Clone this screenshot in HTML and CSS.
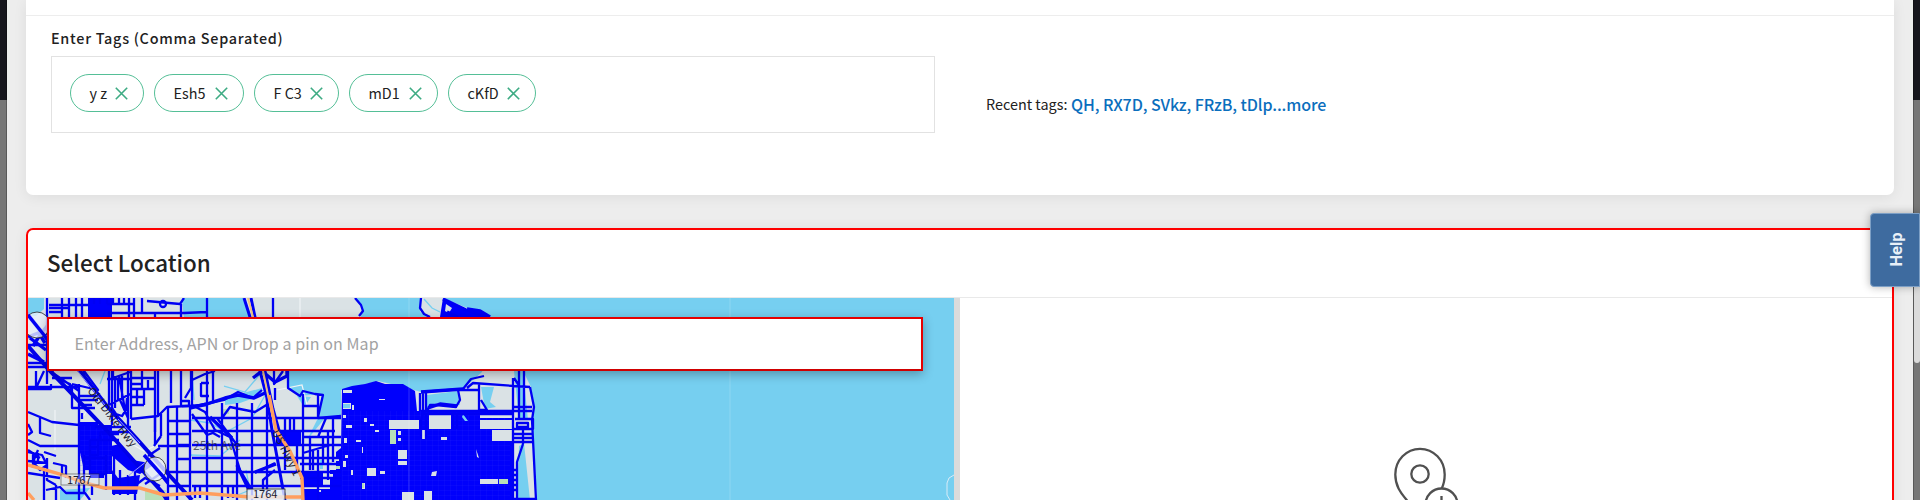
FILE: index.html
```html
<!DOCTYPE html>
<html lang="en">
<head>
<meta charset="utf-8">
<title>Select Location</title>
<link rel="stylesheet" href="styles.css">
</head>
<body>
<div class="page">
  <main class="modal">
    <section class="card tags-card">
      <div class="tags-row">
        <div class="tags-field">
          <div class="label">Enter Tags (Comma Separated)</div>
          <div class="tag-box">
            <span class="tag w1"><span>y z</span><svg class="x" viewBox="0 0 13 13"><path d="M.8.8l11.4 11.4M12.2.8L.8 12.2"/></svg></span>
            <span class="tag w2"><span>Esh5</span><svg class="x" viewBox="0 0 13 13"><path d="M.8.8l11.4 11.4M12.2.8L.8 12.2"/></svg></span>
            <span class="tag w3"><span>F C3</span><svg class="x" viewBox="0 0 13 13"><path d="M.8.8l11.4 11.4M12.2.8L.8 12.2"/></svg></span>
            <span class="tag w4"><span>mD1</span><svg class="x" viewBox="0 0 13 13"><path d="M.8.8l11.4 11.4M12.2.8L.8 12.2"/></svg></span>
            <span class="tag w5"><span>cKfD</span><svg class="x" viewBox="0 0 13 13"><path d="M.8.8l11.4 11.4M12.2.8L.8 12.2"/></svg></span>
          </div>
        </div>
        <div class="recent"><span class="recent-label">Recent tags:</span><span class="recent-links">QH, RX7D, SVkz, FRzB, tDlp...more</span></div>
      </div>
    </section>
    <section class="card location-card">
      <h2 class="title">Select Location</h2>
      <div class="location-body">
        <div class="map">
          <svg class="map-art" viewBox="28 298 926 202">
            <defs>
              <pattern id="lots" width="15" height="13.5" patternUnits="userSpaceOnUse" x="192" y="418"><path d="M0 1H15M1 0V13.5" stroke="#0000f0" stroke-width="2.4" fill="none"/></pattern>
              <pattern id="fine" width="6" height="5" patternUnits="userSpaceOnUse"><path d="M0 0H6M0 0V5" stroke="#3030f8" stroke-width=".3" fill="none"/></pattern>
            </defs>
            <rect x="28" y="298" width="926" height="202" fill="#76cff0"/>
            <path class="land" d="M28 298H182L184 317H207V298H355L362 306 361 317 350 330H287V371L288 388 300 396 322 394 318 417 341 416V390L378 381 400 386 421 392 463 389 482 372 488 345 420 312 421 298H443L520 330 523 371 531 387 534 407 532 420 537 500H28Z"/>
            <path class="water" d="M28 298H44V309L36 316H28ZM182 298H207V317H184ZM207 298H245L250 317H207ZM427 395L457 391 460 405 438 403 427 408ZM481 387H494L490 402 496 407 485 409ZM297 396L311 397 304 407ZM318 418H325L307 440ZM519 446L524 443 530 500H517ZM60 490L90 488 80 500H60ZM514 371H523L528 420H519ZM225 398L262 388 262 395 240 403 225 405Z"/>
            <path class="stream" d="M200 317V345L192 372 194 400M190 420L210 423 226 432 252 418 267 392M92 317L105 371 100 384M190 455L220 456 240 440M224 386L245 392 262 372M246 470L250 490 235 496M424 299L432 308 440 312"/>
            <path class="minor" d="M300 298V317M82 418l8-12M130 443l14 8 13-6M277 390l25-5 5 20M55 410v40"/>
            <path class="green" d="M145 490H166V500H145ZM223 409h6v5h-6Z"/>
            <path class="lots" d="M192 418H300V500H192Z"/>

            <path class="fill" d="M79 422H98L98 425H112V470L118 478 140 475 137 494H112V474H104V478H90V470H84L79 448ZM88 298H112V317H88ZM111 446L120 444 126 452 132 460 150 463 152 466 140 474 128 470 112 456ZM276 431H301V445H276ZM302 471H323V485H302ZM342 389L352 386 365 384 376 381 385 384 403 384 415 391 417 411H513V500H304V489H330V470H336V452L341 448ZM443 298L466 310 490 317H440Z"/>
            <path class="fine" d="M342 411H510V500H342ZM80 426H112V474H80Z"/>
            <path class="hole" d="M389 420h30v9h-30ZM429 415h22v14h-22ZM480 415h32v3h-32ZM480 420h32v9h-32ZM492 430h20v11h-20ZM421 430h6v9h-6ZM398 450h9v9h-9ZM398 461h9v4h-9ZM480 479h18v5h-18ZM367 468h9v8h-9ZM343 390h9v3h-9ZM343 403h8v6h-8ZM364 418h3v4h-3ZM343 415h3v3h-3ZM441 437h6v3h-6ZM432 472l5-1-1 5h-5ZM370 424h4v2h-4ZM346 425h6v3h-6ZM344 438h3v5h-3ZM356 440h5v2h-5ZM345 455h3v3h-3ZM362 447h1v6h-1ZM375 430h4v2h-4ZM402 492h12v8h-12ZM424 491h8v9h-8ZM362 483h3v6h-3ZM380 471h5v3h-5ZM398 431h3v4h-3ZM398 438h3v3h-3ZM476 449l3 9-2-1ZM446 304l6 4-3 5-4-2ZM335 457h4v4h-4ZM330 474h3v5h-3ZM343 461h3v6h-3ZM351 470h2v5h-2ZM317 490h4v2h-4ZM352 405h2v5h-2ZM379 399h6v1h-6Z"/>
            <path class="water" d="M343 404h7v4h-7ZM320 460h3v9h-3ZM463 414l5 7h-3l-3-4Z"/>
            <path class="green" d="M390 430h6v14h-6ZM499 479h9v5h-9ZM336 466h4v3h-4ZM362 483h2v5h-2Z"/>

            <path class="b2" d="M47 298V384M49 305H88M49 312H62M62 298V317M69 298V317M82 298V317M76 298V317M49 308H69M107 304H129M129 298V317M134 298V317M107 313H184L207 312M207 298V317M181 304V317M273 298V317M94 298V304M100 298V304M107 298V304M113 298V304M119 298V304M124 298V304M134 304H108M142 298V313M147 301L180 304 184 298M155 313V317M355 298L361 305 363 311 359 316M421 298L420 308 424 314 430 317"/>
            <path class="b2" d="M28 387H79M79 384V500M28 389H51V384M28 412L52 422 79 425M28 363H48L56 378 70 384 71 390M28 367H56M28 345L52 345M36 371V386M44 371L37 386M84 371L98 390 72 384M50 371L79 391M79 396H98M79 400H98M79 405H92M52 378H72M82 413V419M72 387V408L95 408M112 371V425M84 371V378"/>
            <path class="b2" d="M107 379H130M109 371V405M115 376V408M118 378V400M122 376V400M128 371V432M131 371V419M142 371V389M155 371V432M131 378H155M131 384H142M131 389H155M148 380V389M158 371V417M171 371V403M181 371V407M191 371V388L185 398M131 397H144M131 405H144M137 390V405M144 389V405M131 419L158 416 167 407 207 405M109 405L130 394M95 427H131M112 408L116 414 122 416 126 410 127 398M120 400L128 418M119 376L125 410"/>
            <path class="b2" d="M155 416V445M161 414V436M168 407V500M177 407V500M190 407V500M182 401h7v5h-7M190 418V500M168 421H190M168 434H190M177 445H190M158 446H190M177 459H190M148 456L160 448M168 472H192M168 486H190M161 436L154 446M113 371V378L130 372M145 484l15-10 8 10M137 484l8-6 15 8"/>
            <path class="b2" d="M100 432H130M90 440V475M100 432V440H90M98 440V455H90M90 447H98M98 440H119M119 434H102M84 458H106V474H90M84 455V478M106 455V490M114 455V495M120 470V495M128 475V495M135 470V500M28 440L40 446H79M40 418V433L51 436M28 424L32 432 28 435M28 452L42 455 47 465 40 470 33 462 38 450M47 458V480L56 485M28 473L60 478M53 463L66 466V478M44 452L56 456M33 452V468M38 453V463M28 461L47 463M44 470V500M56 485V500M46 490L60 487 66 493H85L90 500M84 478V494M92 485V495M62 466V475M28 450L40 458"/>
            <path class="b2" d="M192 371V405L205 412 215 430 230 437 240 470 252 490M192 380L205 374 215 371M207 371V403M213 371V403M201 383V396H209M201 383H209M190 407L210 403 224 400 238 392 253 398 262 390M222 418L230 407 255 412 268 404M207 405V500M222 403V500M237 403V500M252 403V500M267 398V500M192 418H341M192 431H335M192 445H341M192 458H341M192 472H341M192 486H341M192 414L207 435 213 433 220 437M217 418L237 445M255 473L275 463M263 490V480L275 470M195 486V498M200 486V498M228 486V498M233 486V498"/>
            <path class="b2" d="M288 371V388L300 396 303 391 315 394 323 395 318 417M303 394V500M318 394V418M303 406H318M318 418L341 416M326 418L318 437M285 418V470M290 418V431M294 418V431M333 417V462M303 437H341M310 437V470M318 450V500M328 430V480M313 450V470M323 437V463M300 464H341M300 478H341M297 445V471M275 388V400M274 371V384L283 371M303 453L330 445"/>
            <path class="b3" d="M253 378L262 371 275 382 287 376 287 371M190 408L207 404 225 398 238 395 254 398 265 393M210 417L232 438M237 465L249 490M255 472L276 464"/>
            <path class="b2" d="M421 392L463 389 471 379 484 376M467 388L473 383 514 386 530 387M420 393V411M423 393V411M426 393V411M427 411L430 405 436 405 456 407 460 400 458 390H478M479 384V410L487 410 481 400M513 378V500M421 411H532M421 414H513M530 387L534 407 532 420 536 500M519 371V420M524 371V420M514 378L520 387M424 411L421 420V439M426 415V439M453 413V429M457 413V429M513 407H532M515 419H533V429H513M517 423H528V427H517ZM513 434H532M513 438H532M513 442H532M523 429V444M523 444L517 462V500M513 470h5M513 475h5M513 480h5M513 485h5M513 490h5M536 499H513"/>
            <path class="b3" d="M443 299L466 310 488 317M447 312L458 317M467 309L480 311 490 317M421 392L463 389M428 408L440 404 457 406"/>

            <path class="rail" d="M28 346L50 371 75 397 110 434 133 460 162 492 167 500M28 315L48 340 80 371 106 405 137 439 160 465 192 500"/>
            <path class="b3" d="M28 337L43 331 48 325M30 338L46 350M33 346L40 335 45 343M28 354L44 362"/>
            <path class="double" d="M28 312L49 339M76 369L105 405M128 476L147 461M118 419L140 443"/>
            <path class="b5" d="M244 298L250 317 260 371 267 398 272 430 285 500M251 298L255 317 265 371 273 409 280 434"/>
            <path class="road-y" d="M248 298L253 317 263 371 269 400 276 430"/>
            <path class="road" d="M269 395L276 430 290 451 302 478 303 500M28 465L60 474 82 482 104 488 140 488 164 495 200 493 250 497 303 497M28 493L34 500"/>
            <ellipse class="badge" cx="155" cy="469" rx="11" ry="12"/>
            <ellipse class="badge" cx="37" cy="325" rx="13" ry="13"/>
            <path class="b3" d="M144 455L168 482M28 315L48 340"/>
            <circle cx="163" cy="304" r="3" class="b2"/>
            <rect class="badge" x="247" y="489" width="38" height="14"/>
            <rect class="badge soft" x="61" y="474" width="38" height="11"/>
            <g class="map-text">
              <text x="253" y="498">1764</text>
              <text x="67" y="484">1767</text>
              <text x="193" y="450" class="faint">25th Ave</text>
              <text transform="translate(87 391) rotate(52)" textLength="72">Old Dixie Hwy</text>
              <text transform="translate(272 432) rotate(64)" textLength="50">US Hwy 1</text>
            </g>
            <path d="M409 298V500M730 298V500" stroke="#fff" stroke-opacity=".18"/>
            <path d="M954 475L949 478 947 483 947 495 950 500" stroke="#d9ebf7" fill="none" stroke-width="1"/>
          </svg>
          <div class="search">Enter Address, APN or Drop a pin on Map</div>
        </div>
        <div class="empty">
          <svg class="pin" viewBox="0 0 66 72"><path d="M48.5 42c2-4 3.200-8.500 3.200-14.500a24.700 25.700 0 0 0-49.400 0c0 11 5 18 11 25l14 18"/><circle cx="27" cy="27" r="8.700"/><circle cx="48.500" cy="57.500" r="16"/><path d="M48.500 49v17M40 57.500h17"/></svg>
        </div>
      </div>
    </section>
  </main>
  <div class="thumb"></div>
  <div class="help"><span>Help</span></div>
</div>
</body>
</html>
```
FILE: styles.css
```css
* { box-sizing: border-box; }
body { margin: 0; overflow: hidden; font-family: "Noto Sans CJK SC", "Noto Sans", sans-serif; color: #212121; }
.page { position: relative; width: 1920px; height: 500px; overflow: hidden; padding: 0 7px; background: linear-gradient(#17161d 100px, #777 100px); }
.modal { height: 500px; padding: 0 19px; background: #ededed; box-shadow: 0 0 0 1px rgba(0,0,0,.25); }
.card { background: #fff; width: 1868px; box-shadow: 0 2px 14px rgba(0,0,0,.07); }
.tags-card { height: 195px; padding-top: 15px; border-radius: 0 0 7px 7px; }
.tags-row { display: flex; height: 180px; border-top: 1px solid #ededed; padding-left: 25px; }
.tags-field { width: 884px; }
.label { height: 40px; line-height: 44px; font-size: 14.400px; font-weight: 500; letter-spacing: .73px; white-space: nowrap; }
.tag-box { display: flex; gap: 10px; height: 77px; border: 1px solid #e2e2e2; padding: 17px 18px; }
.tag { display: flex; align-items: center; justify-content: space-between; height: 38px; padding: 0 15.500px 0 18.500px; border: 1.400px solid #55bf97; border-radius: 19px; font-size: 14.400px; line-height: 36px; white-space: nowrap; }
.w1 { width: 74px; }
.w2 { width: 90px; }
.w3 { width: 85px; }
.w4 { width: 89px; }
.w5 { width: 88px; }
.x { width: 13px; height: 13px; fill: none; stroke: #3dab83; stroke-width: 1.600; }
.recent { display: flex; padding: 75px 0 0 51px; line-height: 26px; white-space: nowrap; }
.recent-label { width: 85px; font-size: 14.400px; }
.recent-links { font-size: 16px; font-weight: 500; color: #0a6ebd; letter-spacing: -.1px; }
.location-card { height: 300px; margin-top: 33px; border: 2px solid #f00; border-bottom: 0; border-radius: 7px 7px 0 0; }
.title { height: 68px; margin: 0; padding-left: 19px; border-bottom: 1px solid #e9e9e9; font-size: 22.400px; line-height: 65px; font-weight: 500; white-space: nowrap; }
.location-body { display: flex; height: 202px; }
.map { position: relative; width: 932px; border-right: 6px solid #dbdbdb; }
.map-art { display: block; width: 926px; height: 202px; }
.search { position: absolute; left: 19px; top: 19px; width: 876px; height: 54px; border: 2px solid #e60000; border-bottom-color: #d00000; background: #fff; padding-left: 25.500px; color: #a2a2a2; font-size: 16px; letter-spacing: .08px; line-height: 49px; box-shadow: 0 3px 10px rgba(0,0,0,.3); white-space: nowrap; }
.empty { flex: 1; padding: 149px 0 0 433px; }
.pin { display: block; width: 66px; height: 72px; fill: none; stroke: #505050; stroke-width: 2.300; }
.pin circle { fill: #fff; }
.thumb { position: absolute; left: 1914px; top: 240px; width: 6px; height: 123px; border-radius: 3px; background: #dbdbdb; }
.help { position: absolute; left: 1870px; top: 213px; width: 50px; height: 74px; display: flex; align-items: center; justify-content: center; border: 1px solid #7d9fc5; border-radius: 4px 0 0 4px; background: #3e6b9f; color: #e8f0f8; font: 700 16.500px "Roboto", sans-serif; box-shadow: 0 0 8px rgba(0,0,0,.3); }
.help span { transform: translate(1px, -1px) rotate(-90deg); }
.land { fill: #dae2e5; }
.water { fill: #76cff0; }
.stream { fill: none; stroke: #76cff0; stroke-width: 1.300; }
.minor { fill: none; stroke: #f0f4f5; stroke-width: 1.200; }
.green { fill: #b8dfb8; }
.lots { fill: none; }
.fill { fill: #0000fc; }
.fine { fill: url(#fine); }
.hole { fill: #dae2e5; }
.b2, .b3, .b5 { fill: none; stroke: #0000f4; stroke-width: 2.300; stroke-linejoin: round; }
.b3 { stroke-width: 3.400; }
.b5 { stroke-width: 3; }
.rail { fill: none; stroke: #0000e8; stroke-width: 4; }
.double { fill: none; stroke: #9696ff; stroke-width: 1; }
.road { fill: none; stroke: #ff9e5e; stroke-width: 3.400; }
.road-y { fill: none; stroke: #efc27f; stroke-width: 2; }
.badge { fill: #e8f0fa; fill-opacity: .8; stroke: #222; stroke-width: .8; }
.soft { fill-opacity: .35; stroke-opacity: .6; }
.map-text { font-size: 11px; fill: #1d2030; }
.faint { font-size: 12px; fill-opacity: .7; }
```
